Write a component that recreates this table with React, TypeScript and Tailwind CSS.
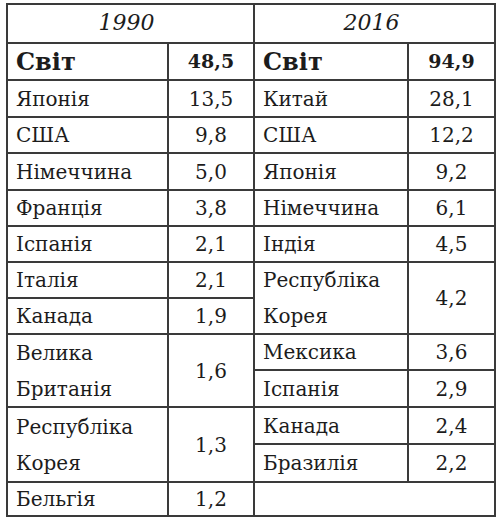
import React from "react";

type Cell = { t: string; cls: string };

const F = "font-['DejaVu_Serif',serif]";

export default function App() {
  const name = "bg-white flex items-center px-[8px] text-[20px] leading-[36px] text-[#1c1c1c]";
  const val = "bg-white flex items-center justify-center text-[20px] text-[#1c1c1c]";
  const cells: Cell[] = [
    { t: "1990", cls: "col-span-2 bg-white flex items-center justify-center pr-[8px] pb-[2px] italic text-[22px] text-[#1c1c1c]" },
    { t: "2016", cls: "col-span-2 bg-white flex items-center justify-center pr-[6px] pb-[2px] italic text-[22px] text-[#1c1c1c]" },
    { t: "Світ", cls: "bg-white flex items-center px-[8px] font-bold text-[24px] text-[#1c1c1c]" },
    { t: "48,5", cls: "bg-white flex items-center justify-center font-bold text-[19px] text-[#1c1c1c]" },
    { t: "Світ", cls: "bg-white flex items-center px-[8px] font-bold text-[24px] text-[#1c1c1c]" },
    { t: "94,9", cls: "bg-white flex items-center justify-center font-bold text-[19px] text-[#1c1c1c]" },
    { t: "Японія", cls: name },
    { t: "13,5", cls: val },
    { t: "Китай", cls: name },
    { t: "28,1", cls: val },
    { t: "США", cls: name },
    { t: "9,8", cls: val },
    { t: "США", cls: name },
    { t: "12,2", cls: val },
    { t: "Німеччина", cls: name },
    { t: "5,0", cls: val },
    { t: "Японія", cls: name },
    { t: "9,2", cls: val },
    { t: "Франція", cls: name },
    { t: "3,8", cls: val },
    { t: "Німеччина", cls: name },
    { t: "6,1", cls: val },
    { t: "Іспанія", cls: name },
    { t: "2,1", cls: val },
    { t: "Індія", cls: name },
    { t: "4,5", cls: val },
    { t: "Італія", cls: name },
    { t: "2,1", cls: val },
    { t: "Республіка Корея", cls: name + " row-span-2" },
    { t: "4,2", cls: val + " row-span-2" },
    { t: "Канада", cls: name },
    { t: "1,9", cls: val },
    { t: "Велика Британія", cls: name + " row-span-2" },
    { t: "1,6", cls: val + " row-span-2" },
    { t: "Мексика", cls: name },
    { t: "3,6", cls: val },
    { t: "Іспанія", cls: name },
    { t: "2,9", cls: val },
    { t: "Республіка Корея", cls: name + " row-span-2" },
    { t: "1,3", cls: val + " row-span-2" },
    { t: "Канада", cls: name },
    { t: "2,4", cls: val },
    { t: "Бразилія", cls: name },
    { t: "2,2", cls: val },
    { t: "Бельгія", cls: name },
    { t: "1,2", cls: val },
    { t: "", cls: "col-span-2 bg-white" },
  ];
  return (
    <div className={`w-[500px] h-[522px] bg-white pt-[3px] pl-[6px] ${F}`}>
      <div className="grid w-[490px] h-[514px] bg-[#3a3a3a] p-[2px] gap-[2px] grid-cols-[159px_84px_152px_85px] grid-rows-[37px_35px_35px_34px_35px_34px_34px_34px_34px_34px_35px_35px_36px_32px]">
        {cells.map((c, i) => (
          <div key={i} className={c.cls}>
            <span>{c.t}</span>
          </div>
        ))}
      </div>
    </div>
  );
}
